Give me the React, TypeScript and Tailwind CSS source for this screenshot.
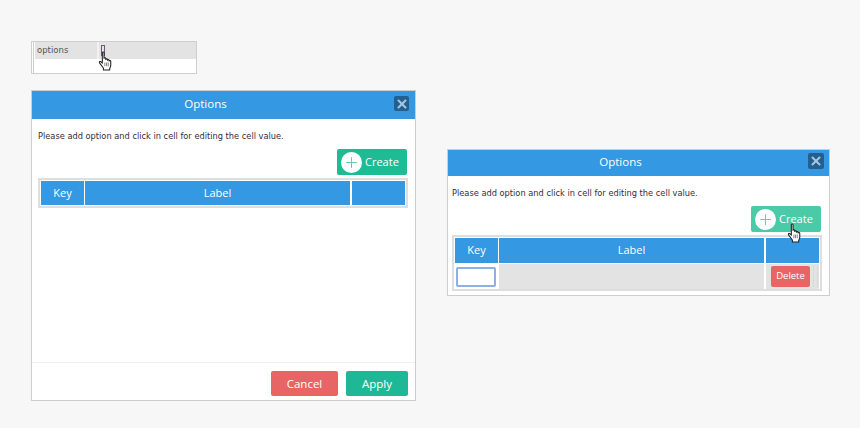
import { X, Plus } from "lucide-react";

const sans = "font-['Open_Sans','Noto_Sans',sans-serif]";
const small = "font-['DejaVu_Sans',sans-serif]";

function Hand({ className }: { className: string }) {
  return (
    <svg viewBox="0 0 14 19" className={className} width="15" height="20">
      <path
        d="M4 1.500c0-.8 1.600-.8 1.600 0V7c0-.7 1.600-.7 1.600 0v1c0-.7 1.600-.7 1.600 0v.7c0-.7 1.600-.7 1.600 0v.8c0-.7 1.600-.6 1.600.2v3.800c0 1.200-.5 2-1 3v1.500H5v-1.800L1.500 11.500c-.8-1 .1-2.100 1.100-1.300L4 11.500z"
        fill="#fff"
        stroke="#222"
        strokeWidth="1"
        strokeLinejoin="round"
      />
      <path d="M6.400 11v3.500M8 11v3.500M9.600 11v3.500" stroke="#555" strokeWidth=".7" />
    </svg>
  );
}

function Header({ title, h, box }: { title: string; h: string; box: string }) {
  return (
    <div className={`${h} bg-[#3498e2] flex items-center justify-center relative pr-[36px] pb-[2px] text-white text-[11.500px] ${sans}`}>
      {title}
      <div className={`${box} absolute rounded-[2px] bg-[#24608f] flex items-center justify-center`}>
        <X size={14} strokeWidth={3.5} color="#a3c6e2" />
      </div>
    </div>
  );
}

function CreateButton({ bg }: { bg: string }) {
  return (
    <button className={`${bg} w-[70px] h-[26px] mr-[1px] rounded-[2px] flex items-center pl-[4px] gap-[3px] text-white text-[11px] ${sans}`}>
      <span className="w-[21px] h-[21px] rounded-full bg-white flex items-center justify-center">
        <Plus size={17} strokeWidth={1.5} color="#62cfb3" />
      </span>
      Create
    </button>
  );
}

function HeadCell({ className, label }: { className: string; label?: string }) {
  return (
    <div className={`${className} bg-[#3498e2] flex items-center justify-center text-white text-[11px] font-medium ${sans}`}>
      {label}
    </div>
  );
}

export default function App() {
  return (
    <div className="w-[860px] h-[428px] bg-[#f7f7f7] flex overflow-hidden">
      <div className="ml-[31px] mt-[41px] w-[385px] flex flex-col">
        {/* cell being edited */}
        <div className="w-[166px] h-[33px] bg-white border border-[#cfcfcf] flex flex-col relative pl-[1px]">
          <div className="h-full border-l border-[#cfcfcf] pl-[1px]">
            <div className="h-[17px] bg-[#e3e3e3] flex">
              <div className={`w-[62px] pl-[2px] pt-[1px] text-[8.500px] text-[#555] leading-[14px] ${small}`}>options</div>
              <div className="w-[2px] bg-[#f2f2f2]" />
              <div className="ml-[2px] mt-[3px] w-[4px] h-[11px] border border-[#6d5a72]" />
            </div>
          </div>
          <Hand className="absolute left-[66px] top-[9px]" />
        </div>

        <div className="mt-[16px] h-[311px] bg-white border border-[#cdcdcd] flex flex-col">
          <Header title="Options" h="h-[28px]" box="right-[6px] top-[5px] w-[15px] h-[15px]" />
          <div className="flex-1 pl-[6px] pr-[7px] pt-[11px]">
            <div className={`text-[8.250px] leading-[12px] text-[#352d38] ${small}`}>
              Please add option and click in cell for editing the cell value.
            </div>
            <div className="flex justify-end mt-[7px]">
              <CreateButton bg="bg-[#1fbb95]" />
            </div>
            <div className="mt-[3px] border-2 border-[#dedede] h-[30px] bg-white flex gap-[1px] p-[1px]">
              <HeadCell className="w-[43px]" label="Key" />
              <HeadCell className="w-[265px]" label="Label" />
              <HeadCell className="flex-1 ml-[1px]" />
            </div>
          </div>
          <div className="h-[38px] border-t border-[#f0f0f0] flex justify-end items-start pt-[8px] pr-[7px] gap-[8px]">
            <button className={`w-[67px] h-[25px] rounded-[2px] bg-[#e76565] text-white text-[11.500px] font-medium ${sans}`}>Cancel</button>
            <button className={`w-[62px] h-[25px] rounded-[2px] bg-[#1fb896] text-white text-[11.500px] font-medium ${sans}`}>Apply</button>
          </div>
        </div>
      </div>

      <div className="ml-[31px] mt-[149px] w-[383px] h-[147px] bg-white border border-[#cdcdcd] flex flex-col">
        <Header title="Options" h="h-[26px]" box="right-[5px] top-[3px] w-[16px] h-[16px]" />
        <div className="pl-[4px] pr-[7px] pt-[11px]">
          <div className={`text-[8.250px] leading-[12px] text-[#352d38] ${small}`}>
            Please add option and click in cell for editing the cell value.
          </div>
          <div className="flex justify-end mt-[7px] relative">
            <CreateButton bg="bg-[#4bcaa8]" />
            <Hand className="absolute right-[20px] top-[17px]" />
          </div>
          <div className="mt-[3px] border-2 border-[#dedede] bg-white pt-[1px] px-[1px] flex flex-col gap-[1px]">
            <div className="h-[25px] flex gap-[1px]">
              <HeadCell className="w-[43px]" label="Key" />
              <HeadCell className="w-[265px]" label="Label" />
              <HeadCell className="flex-1 ml-[1px]" />
            </div>
            <div className="h-[25px] flex gap-[1px]">
              <div className="w-[43px] bg-white flex items-center pl-[1px]">
                <div className="w-[40px] h-[20px] rounded-[2px] border-2 border-[#90aee6]" />
              </div>
              <div className="w-[265px] bg-[#e3e3e3]" />
              <div className="flex-1 ml-[1px] bg-[#e3e3e3] flex items-center pl-[5px] relative">
                <button className={`w-[39px] h-[21px] rounded-[2px] bg-[#e76565] text-white text-[9.500px] font-medium ${sans}`}>Delete</button>
                <div className="ml-[3px] h-[21px] w-[5px] border-x border-dotted border-[#cfcfcf]" />
              </div>
            </div>
          </div>
        </div>
      </div>
    </div>
  );
}
